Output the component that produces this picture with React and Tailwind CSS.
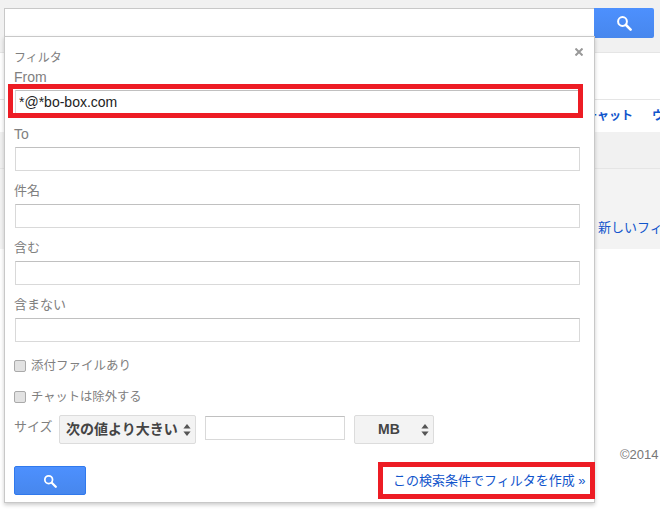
const FONT = 'font-["Liberation_Sans","Noto_Sans_CJK_JP",sans-serif]';

function SearchIcon({ className }) {
    return (
        <svg viewBox="0 0 16 16" className={className} fill="none" stroke="white">
            <circle cx="6.5" cy="6.5" r="4.4" strokeWidth="2" />
            <path d="M10 10l4.6 4.6" strokeWidth="2.6" strokeLinecap="round" />
        </svg>
    );
}

function UpDown() {
    return (
        <svg viewBox="0 0 8 12" className="w-[8px] h-[12px] fill-[#555]">
            <path d="M4 0l3.6 4.6H.4z" />
            <path d="M4 12L.4 7.4h7.2z" />
        </svg>
    );
}

function Field({ label, labelClass }) {
    return (
        <div className={labelClass}>
            <div className="mb-[5px] leading-[16px] text-[#808080]">{label}</div>
            <input
                readOnly
                value=""
                className="block ml-[1px] w-[565px] h-[24px] border border-[#d9d9d9] border-t-[#c0c0c0] outline-none"
            />
        </div>
    );
}

function Check({ label, className, labelClass }) {
    return (
        <div className={`flex items-center gap-[5px] ${className}`}>
            <span className="w-[12px] h-[12px] rounded-[2px] border border-[#aaa] bg-[#e2e2e2]" />
            <span className={`leading-[16px] text-[#808080] ${labelClass}`}>{label}</span>
        </div>
    );
}

function Select({ className, children }) {
    return (
        <div className={`flex items-center h-[29px] border border-[#dcdcdc] rounded-[2px] bg-[#f3f3f3] text-[14px] font-bold text-[#444] ${className}`}>
            {children}
        </div>
    );
}

export default function App() {
    return (
        <div className={`relative w-[660px] h-[509px] overflow-hidden bg-white ${FONT}`}>
            {/* Page behind the popup */}
            <div className="h-[53px] bg-[#f1f1f1] border-b border-[#e5e5e5] pt-[8px] pl-[4px] flex items-start">
                <div className="w-[590px] h-[29px] bg-white border border-[#c8c8c8] border-r-0" />
                <div className="w-[60px] h-[30px] rounded-r-[2px] bg-gradient-to-b from-[#4d90fe] to-[#4787ed] flex items-center justify-center">
                    <SearchIcon className="w-[16px] h-[16px]" />
                </div>
            </div>
            <div className="h-[47px] border-b border-[#e5e5e5]" />
            <div className="h-[32px] pl-[585px] flex items-center gap-[19px] whitespace-nowrap text-[12px] font-bold text-[#15c]">
                <span>チャット</span>
                <span>ウェブ</span>
            </div>
            <div className="h-[37px] bg-[#f1f1f1] border-b border-[#e5e5e5]" />
            <div className="h-[80px] bg-[#f3f3f3] pl-[598px] pt-[50px] whitespace-nowrap text-[13px] leading-[18px] text-[#15c]">
                新しいフィルタを作成
            </div>
            <div className="pl-[620px] pt-[199px] whitespace-nowrap text-[13px] leading-[14px] text-[#777]">©2014</div>

            {/* Filter popup */}
            <div className="absolute left-[4px] top-[36px] w-[591px] h-[467px] bg-white border border-[#c8c8c8] shadow-[0_2px_4px_rgba(0,0,0,0.2)] pl-[9px] text-[13px]">
                <svg viewBox="0 0 8 8" className="absolute right-[11px] top-[11px] w-[8px] h-[8px] stroke-[#999]" strokeWidth="2">
                    <path d="M0.5 0.5l7 7M7.5 0.5l-7 7" />
                </svg>
                <div className="pt-[13px] text-[12px] leading-[16px] text-[#808080]">フィルタ</div>
                <div className="pt-[3px] text-[14px] leading-[16px] text-[#808080]">From</div>
                <input
                    readOnly
                    value="*@*bo-box.com"
                    className="block ml-[1px] mt-[5px] w-[565px] h-[24px] border border-[#d9d9d9] border-t-[#c0c0c0] pl-[3px] text-[14px] text-[#222] outline-none"
                />
                <Field label="To" labelClass="pt-[12px] text-[14px]" />
                <Field label="件名" labelClass="pt-[12px]" />
                <Field label="含む" labelClass="pt-[12px]" />
                <Field label="含まない" labelClass="pt-[12px]" />
                <Check label="添付ファイルあり" className="pt-[16px]" labelClass="text-[12.5px]" />
                <Check label="チャットは除外する" className="pt-[15px]" labelClass="text-[12.3px]" />
                <div className="flex items-start pt-[10px]">
                    <span className="w-[45px] pt-[4px] leading-[16px] text-[#808080]">サイズ</span>
                    <Select className="w-[137px] pl-[6px] gap-[5px] whitespace-nowrap">
                        <span>次の値より大きい</span>
                        <UpDown />
                    </Select>
                    <input readOnly className="block ml-[9px] mt-[1px] w-[140px] h-[24px] border border-[#d9d9d9] border-t-[#c0c0c0]" />
                    <Select className="ml-[9px] w-[80px] pl-[23px] gap-[21px]">
                        <span>MB</span>
                        <UpDown />
                    </Select>
                </div>
                <div className="flex pt-[22px]">
                    <div className="w-[72px] h-[29px] rounded-[2px] border border-[#3079ed] bg-gradient-to-b from-[#4d90fe] to-[#4787ed] flex items-center justify-center">
                        <SearchIcon className="w-[14px] h-[14px]" />
                    </div>
                </div>

                {/* Red annotation boxes */}
                <div className="absolute left-[3px] top-[47px] w-[575px] h-[34px] border-[5px] border-[#ed1c24]" />
                <div className="absolute left-[373px] top-[425px] w-[217px] h-[37px] border-[5px] border-[#ed1c24] bg-white flex items-center pl-[10px] whitespace-nowrap text-[13px] text-[#15c]">
                    この検索条件でフィルタを作成 »
                </div>
            </div>
        </div>
    );
}
